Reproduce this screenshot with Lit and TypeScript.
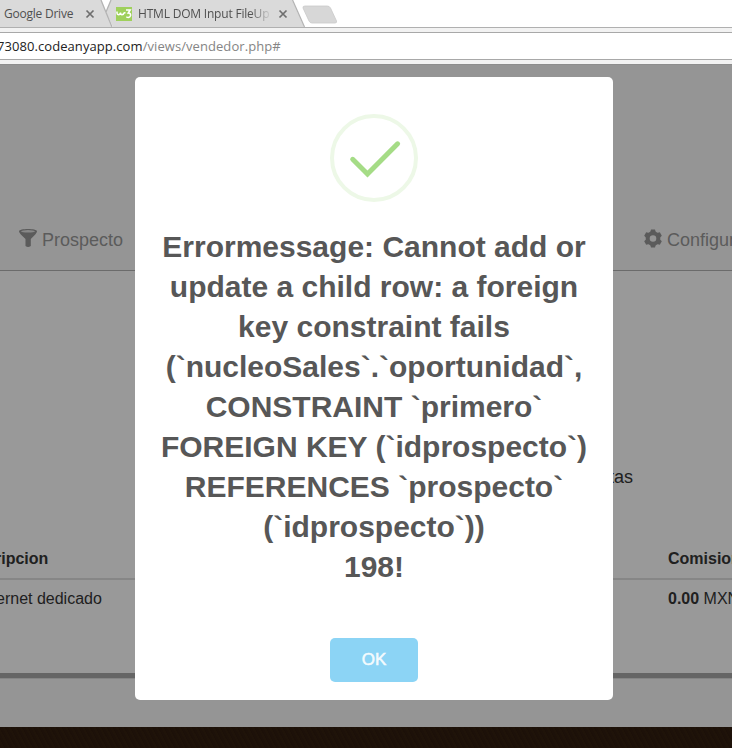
import { LitElement, html, css, svg } from "lit";
import { customElement } from "lit/decorators.js";

const closeIcon = html`<svg class="close" width="10" height="10" viewBox="0 0 10 10">
  <path d="M1.5 1.5L8.5 8.5M8.5 1.5L1.5 8.5" stroke="#6e6e6e" stroke-width="1.7" fill="none" />
</svg>`;

@customElement("browser-chrome")
class BrowserChrome extends LitElement {
  static styles = css`
    :host { display: block; height: 64px; overflow: hidden; background: #f2f2f2; font-family: "Open Sans", "Noto Sans", sans-serif; }
    .strip { position: relative; height: 28px; box-sizing: border-box; background: #fff; }
    .shape { position: absolute; inset: 0; }
    .tabs { position: relative; display: flex; align-items: center; height: 27px; padding-left: 4px; font-size: 12px; color: #505050; white-space: nowrap; }
    .drive { width: 81px; letter-spacing: -0.23px; }
    .close { flex: none; }
    .logo { margin-left: 21px; margin-right: 6px; flex: none; }
    .name { width: 131px; overflow: hidden; letter-spacing: -0.2px; margin-right: 9px; -webkit-mask-image: linear-gradient(90deg, #000 112px, transparent 134px); mask-image: linear-gradient(90deg, #000 112px, transparent 134px); }
    .url { box-sizing: border-box; height: 28px; margin-top: 4px; border-top: 1px solid #a8a8a8; border-bottom: 1px solid #a8a8a8; background: #fff; color: #858585; font-size: 13px; line-height: 26px; white-space: nowrap; }
    .text { display: inline-block; margin-left: -3px; letter-spacing: 0.07px; }
    .host { color: #222; }
  `;
  render() {
    return html`
      <div class="strip">
        <svg class="shape" width="732" height="28" viewBox="0 0 732 28">
          <path d="M0 0H101L112 27H0Z" fill="#dadada" />
          <path d="M111 0H292L304 27H113L106 12Z" fill="#dadada" />
          <path d="M101 0L112 27M111 0L106 12M292.500 0L304.500 27" fill="none" stroke="#b4b4b4" stroke-width="1.3" />
          <path d="M305 6H327Q329.500 6 330.500 8L336.500 21Q337 23 335 23H312Q310 23 309 21L303 8Q302.500 6 305 6Z" fill="#d7d7d7" stroke="#c9c9c9" stroke-width=".8" />
          <path d="M0 27.500H732" stroke="#b0b0b0" />
        </svg>
        <div class="tabs">
          <span class="drive">Google Drive</span>${closeIcon}
          <svg class="logo" width="16" height="14" viewBox="0 0 16 14">
            <rect width="16" height="14" fill="#9fd05c" />
            <path d="M1 4.500V6Q1 7.700 2.500 7.700T4.500 6V5.500Q4.500 7.700 6 7.700T8 6L9.500 5.500" fill="none" stroke="#fff" stroke-width="1.500" />
            <path d="M10 3H14.200L12.200 6Q14.800 6 14.600 8.500Q13.500 11.500 10.300 9.800" fill="none" stroke="#fff" stroke-width="1.500" />
          </svg>
          <span class="name">HTML DOM Input FileUpl</span>${closeIcon}
        </div>
      </div>
      <div class="url"><span class="text"><span class="host">73080.codeanyapp.com</span>/views/vendedor.php#</span></div>
    `;
  }
}

@customElement("alert-dialog")
class AlertDialog extends LitElement {
  static styles = css`
    :host { display: flex; flex-direction: column; align-items: center; box-sizing: border-box; width: 478px; height: 623px; padding: 36px 17px 0; border-radius: 5px; background: #fff; font-family: "Liberation Sans", Arial, sans-serif; }
    .icon { flex: none; }
    h2 { margin: 24px 0 0; width: 444px; text-align: center; font-size: 30px; line-height: 40px; font-weight: 600; color: #575757; }
    button { margin-top: 51px; width: 88px; height: 44px; padding: 0; border: 0; border-radius: 5px; background: #8cd4f5; color: #f4fbfe; font: 500 17px "Liberation Sans", Arial, sans-serif; -webkit-text-stroke: 0.5px #f4fbfe; }
  `;
  render() {
    return html`
      <svg class="icon" width="90" height="90" viewBox="0 0 90 90">
        <circle cx="45" cy="45" r="42" fill="none" stroke="#edf8e7" stroke-width="4" />
        <path d="M23.700 46.300L38.500 61L68.600 30.800" fill="none" stroke="#a5dc86" stroke-width="5" stroke-linecap="round" stroke-linejoin="miter" />
      </svg>
      <h2>Errormessage: Cannot add or<br />update a child row: a foreign<br />key constraint fails<br />(\`nucleoSales\`.\`oportunidad\`,<br />CONSTRAINT \`primero\`<br />FOREIGN KEY (\`idprospecto\`)<br />REFERENCES \`prospecto\`<br />(\`idprospecto\`))<br />198!</h2>
      <button>OK</button>
    `;
  }
}

const gearTeeth = [0, 60, 120, 180, 240, 300];

@customElement("app-root")
class AppRoot extends LitElement {
  static styles = css`
    :host { position: relative; display: flex; flex-direction: column; width: 732px; height: 748px; overflow: hidden; background: #999; font-family: "Liberation Sans", Arial, sans-serif; color: #202020; white-space: nowrap; }
    browser-chrome { flex: none; }
    .nav { flex: none; box-sizing: border-box; height: 207px; padding: 163px 0 0 19px; display: flex; align-items: flex-start; background: #959595; border-top: 1px solid #8d8d8d; border-bottom: 1px solid #6b6b6b; font-size: 18px; line-height: 24px; color: #5b5b5b; }
    .item { display: flex; flex: none; gap: 5px; }
    .item svg { flex: none; }
    .first { width: 625px; gap: 4px; }
    .summary { flex: none; box-sizing: border-box; height: 267px; width: 633px; padding-top: 196px; text-align: right; font-size: 18px; line-height: 20px; }
    .row { flex: none; box-sizing: border-box; display: grid; grid-template-columns: 668px 1fr; height: 40px; line-height: 40px; font-size: 16px; }
    .head { height: 42px; line-height: 42px; font-weight: bold; border-bottom: 2px solid #868686; }
    .head + .row { height: 38px; line-height: 38px; }
    .clip { margin-left: -5px; }
    .wide { margin-left: -4px; }
    .gap { height: 55px; }
    .bar { height: 5px; background: #656565; border-bottom: 1px solid #858585; }
    .end { height: 48px; background: #959595; }
    .foot { flex: 1; background: repeating-linear-gradient(62deg, #1d1109 0 2px, #1f1309 2px 4px, #1c1008 4px 5px); }
    alert-dialog { position: absolute; left: 135px; top: 77px; }
  `;
  render() {
    return html`
      <browser-chrome></browser-chrome>
      <div class="nav">
        <div class="item first">
          <svg width="19" height="20" viewBox="0 0 19 20">
            <path d="M0 3.500C0 .3 18 .3 18 3.500Q18 5 11.800 11V18Q9 20 6.500 18V11Q0 5 0 3.500Z" fill="#5b5b5b" />
            <ellipse cx="9" cy="3.300" rx="7" ry="1.200" fill="#888" />
          </svg><span>Prospecto</span>
        </div>
        <div class="item">
          <svg width="18" height="20" viewBox="0 0 18 20">
            <g transform="translate(9 10.500)">
              ${gearTeeth.map((a) => svg`<path d="M-3.200 -5L-2 -9H2L3.200 -5Z" fill="#5b5b5b" transform="rotate(${a})" />`)}
              <circle r="5.300" fill="none" stroke="#5b5b5b" stroke-width="4" />
            </g>
          </svg><span>Configuracion</span>
        </div>
      </div>
      <div class="summary">Ventas</div>
      <div class="row head"><span class="clip">ripcion</span><span>Comision</span></div>
      <div class="row"><span class="wide">ernet dedicado</span><span><b>0.00</b> MXN</span></div>
      <div class="gap"></div>
      <div class="bar"></div>
      <div class="end"></div>
      <div class="foot"></div>
      <alert-dialog></alert-dialog>
    `;
  }
}
